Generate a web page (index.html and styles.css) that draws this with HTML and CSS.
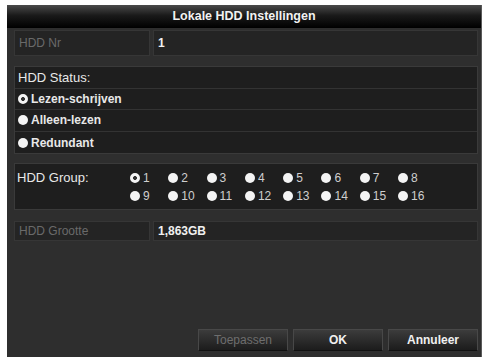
FILE: index.html
```html
<!DOCTYPE html>
<html>
<head>
<meta charset="utf-8">
<link rel="stylesheet" href="styles.css">
</head>
<body>
<div class="dialog">
  <div class="title">Lokale HDD Instellingen</div>
  <div class="content">
    <div class="row nr">
      <div class="cell label dim">HDD Nr</div>
      <div class="cell value">1</div>
    </div>

    <div class="block status">
      <div class="line">HDD Status:</div>
      <div class="line opt"><span class="radio on"></span>Lezen-schrijven</div>
      <div class="line opt"><span class="radio"></span>Alleen-lezen</div>
      <div class="line opt"><span class="radio"></span>Redundant</div>
    </div>

    <div class="block group">
      <div class="glabel">HDD Group:</div>
      <div class="grid">
        <div class="gi"><span class="radio on"></span>1</div>
        <div class="gi"><span class="radio"></span>2</div>
        <div class="gi"><span class="radio"></span>3</div>
        <div class="gi"><span class="radio"></span>4</div>
        <div class="gi"><span class="radio"></span>5</div>
        <div class="gi"><span class="radio"></span>6</div>
        <div class="gi"><span class="radio"></span>7</div>
        <div class="gi"><span class="radio"></span>8</div>
        <div class="gi"><span class="radio"></span>9</div>
        <div class="gi"><span class="radio"></span>10</div>
        <div class="gi"><span class="radio"></span>11</div>
        <div class="gi"><span class="radio"></span>12</div>
        <div class="gi"><span class="radio"></span>13</div>
        <div class="gi"><span class="radio"></span>14</div>
        <div class="gi"><span class="radio"></span>15</div>
        <div class="gi"><span class="radio"></span>16</div>
      </div>
    </div>

    <div class="row size">
      <div class="cell label dim">HDD Grootte</div>
      <div class="cell value">1,863GB</div>
    </div>

    <div class="buttons">
      <div class="btn disabled">Toepassen</div>
      <div class="btn">OK</div>
      <div class="btn">Annuleer</div>
    </div>
  </div>
</div>
</body>
</html>
```

FILE: styles.css
```css
html, body {
  margin: 0;
  padding: 0;
  background: #ffffff;
}
body {
  width: 487px;
  height: 357px;
  overflow: hidden;
  font-family: "Liberation Sans", Arial, sans-serif;
}
.dialog {
  margin: 5px 0 0 7px;
  width: 475px;
  height: 352px;
  background: #2e2e2e;
  border-right: 1px solid #5a5a5a;
  box-sizing: border-box;
  display: flex;
  flex-direction: column;
}
.title {
  height: 23px;
  line-height: 23px;
  text-align: center;
  color: #f2f2f2;
  font-weight: bold;
  font-size: 12.5px;
  background: linear-gradient(#4a4a4a 0%, #1a1a1a 45%, #000000 100%);
}
.content {
  flex: 1;
  display: flex;
  flex-direction: column;
  padding: 2px 3px 6px 7px;
}
.row {
  display: flex;
  gap: 3px;
  height: 22px;
}
.cell {
  background: #242424;
  border: 1px solid #363636;
  box-sizing: border-box;
  font-size: 12px;
  padding-left: 4px;
  display: flex;
  align-items: center;
}
.nr {
  height: 26px;
}
.label {
  width: 136px;
}
.value {
  flex: 1;
  color: #f0f0f0;
  font-weight: bold;
}
.dim {
  color: #6a6a6a;
}
.block {
  background: #1e1e1e;
  border: 1px solid #3a3a3a;
  margin-top: 10px;
}
.status .line {
  height: 21.6px;
  box-sizing: border-box;
  border-bottom: 1px solid #333333;
  padding-left: 3px;
  font-size: 13px;
  color: #e8e8e8;
  display: flex;
  align-items: center;
}
.status .line:last-child {
  border-bottom: none;
}
.status .opt {
  font-weight: bold;
  font-size: 12px;
}
.radio {
  width: 10px;
  height: 10px;
  border-radius: 50%;
  background: #f4f4f4;
  display: inline-block;
  box-sizing: border-box;
  margin-right: 3px;
  flex: none;
}
.radio.on {
  border: 2px solid #f4f4f4;
  background: radial-gradient(circle, #333 0 1.8px, #f4f4f4 2.2px);
}
.group {
  display: flex;
  height: 47px;
  margin-top: 9px;
  box-sizing: border-box;
}
.glabel {
  width: 113px;
  padding: 6px 0 0 2px;
  font-size: 13px;
  color: #e8e8e8;
}
.grid {
  display: grid;
  grid-template-columns: repeat(8, 38.3px);
  grid-auto-rows: 18px;
  padding-top: 5px;
}
.gi {
  display: flex;
  align-items: center;
  font-size: 12px;
  color: #cfcfcf;
}
.size {
  margin-top: 11px;
  height: 20px;
}
.buttons {
  margin-top: auto;
  display: flex;
  justify-content: flex-end;
  gap: 5px;
}
.btn {
  width: 90px;
  height: 22px;
  line-height: 20px;
  box-sizing: border-box;
  text-align: center;
  font-size: 12px;
  font-weight: bold;
  color: #f0f0f0;
  background: linear-gradient(#3c3c3c, #1c1c1c);
  border: 1px solid #484848;
  border-bottom-color: #111;
}
.btn.disabled {
  color: #6e6e6e;
  font-weight: normal;
}
```
